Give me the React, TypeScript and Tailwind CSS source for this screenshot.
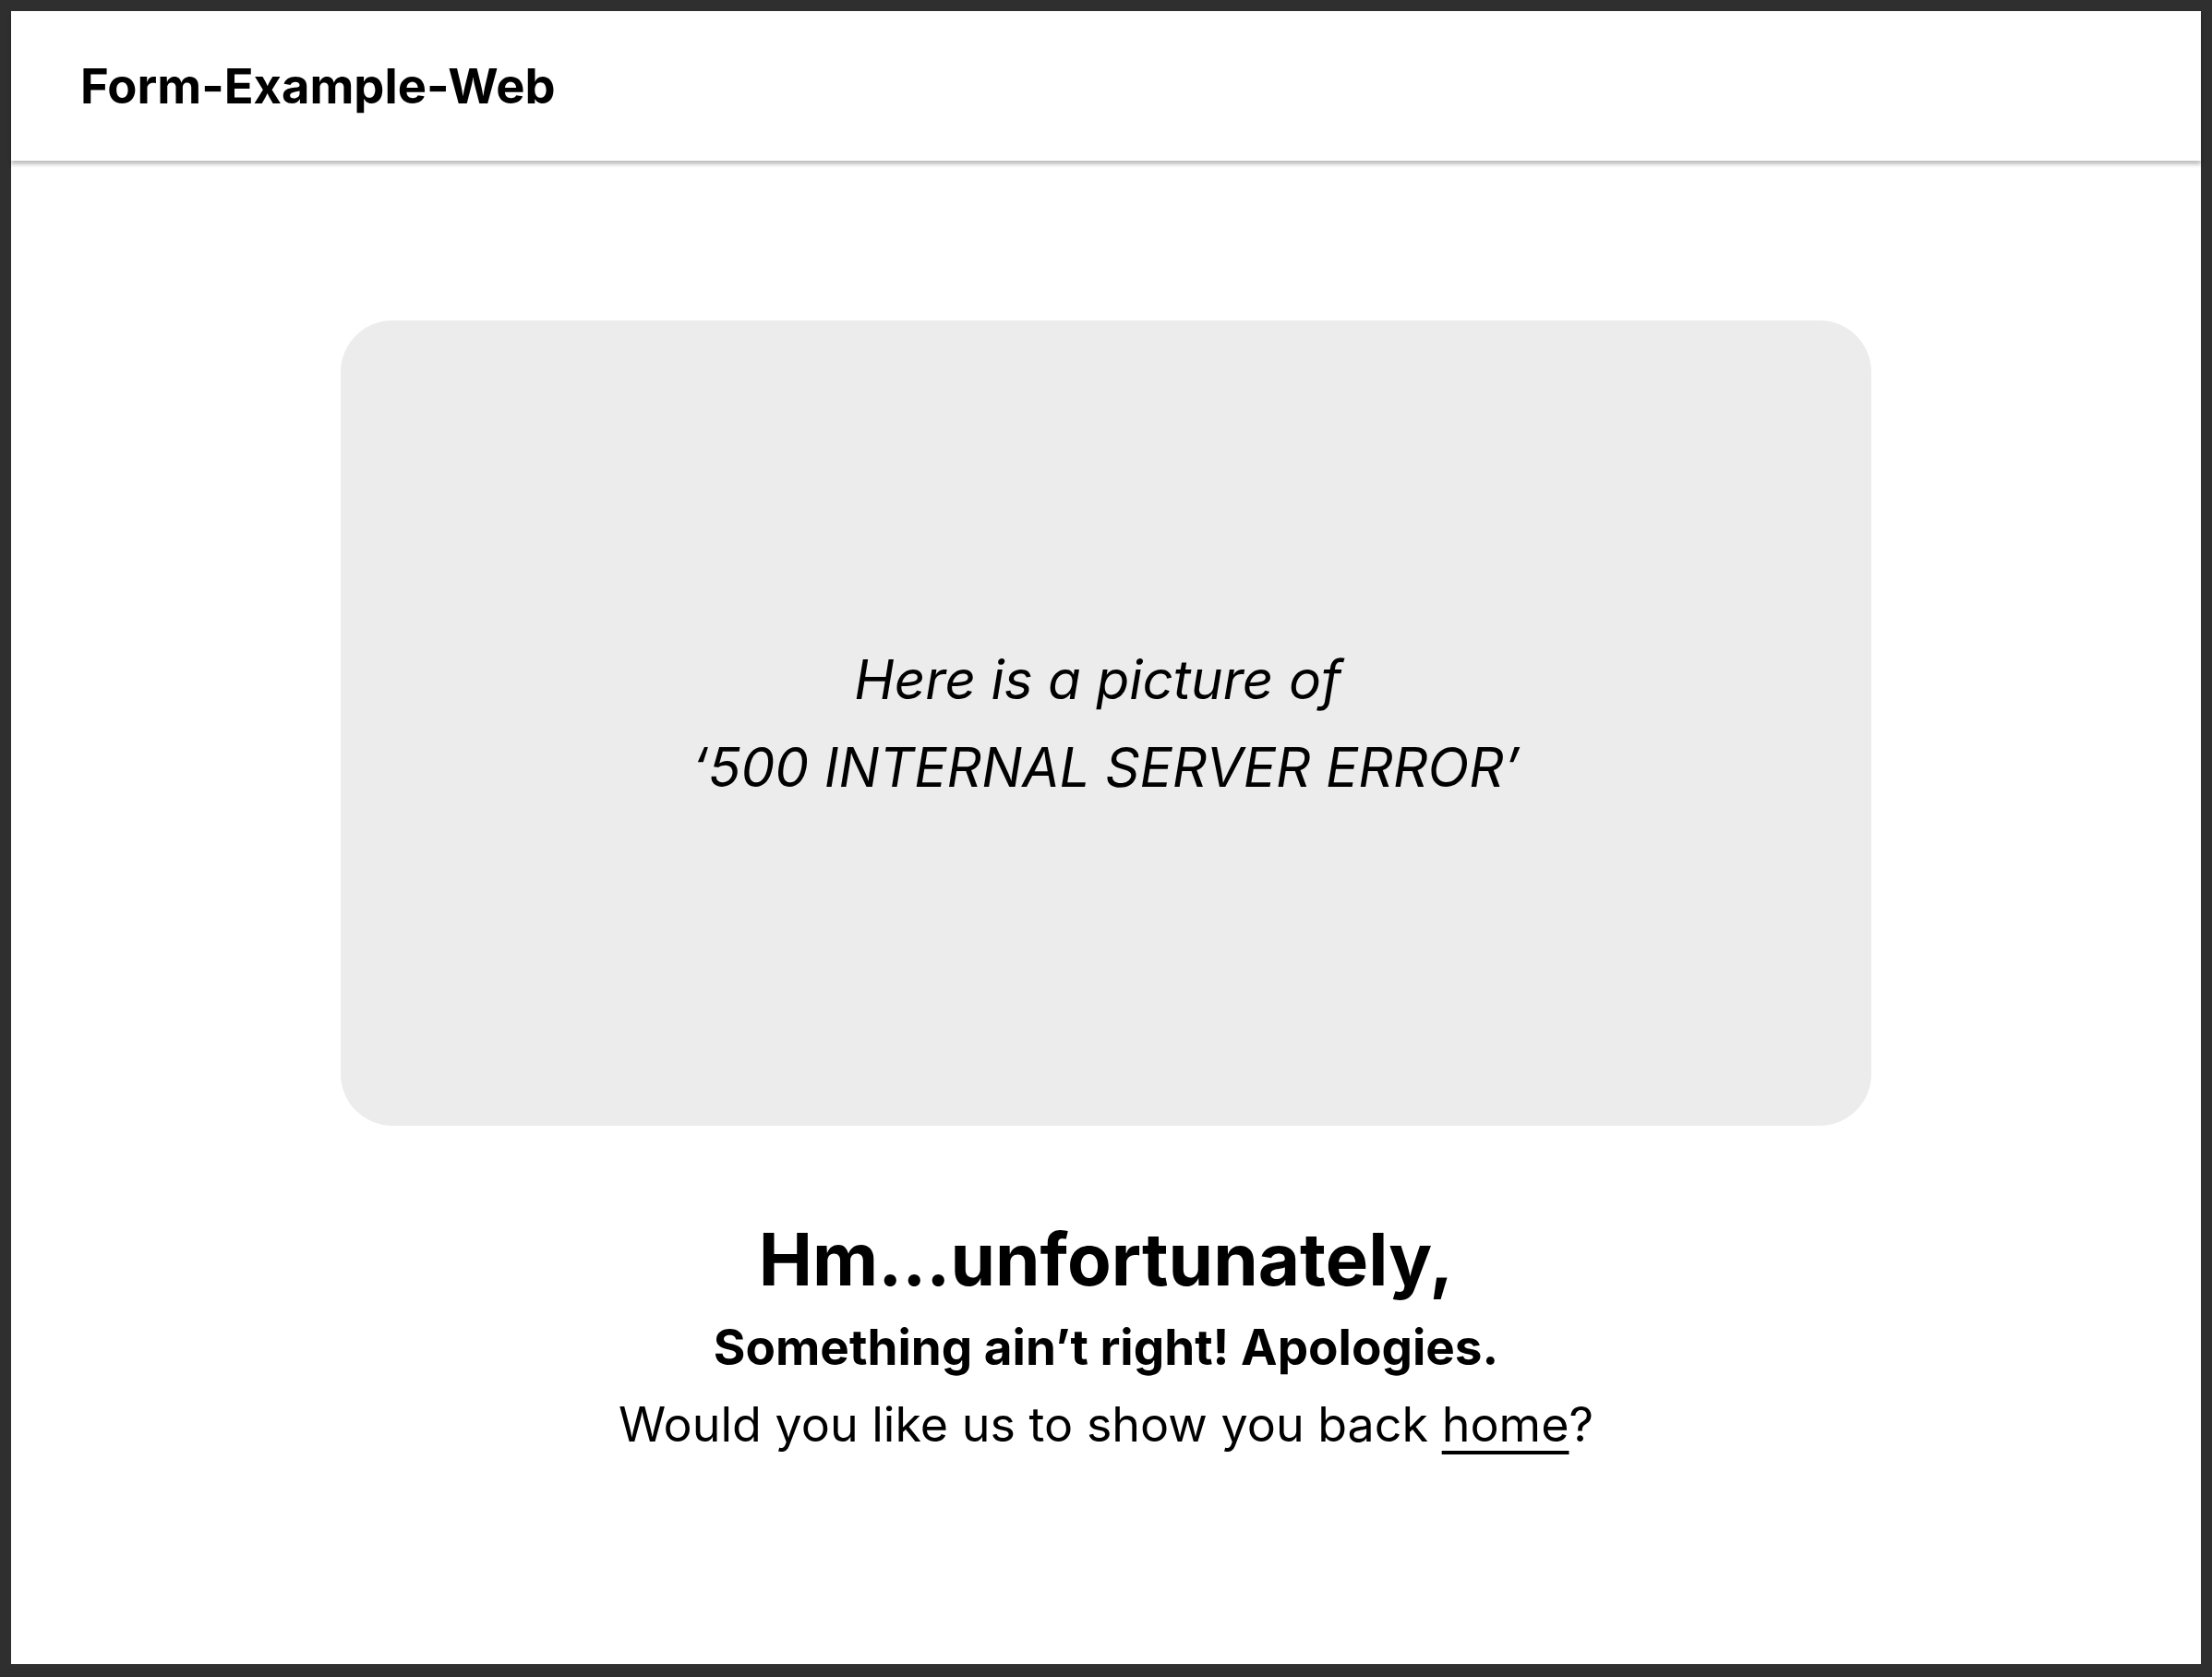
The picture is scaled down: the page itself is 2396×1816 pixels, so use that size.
export default function App() {
  return (
    <div className="h-[1816px] w-full bg-[#2f2f2f] pt-[12px] pr-[12px] pb-[14px] pl-[12px] font-['Inter',sans-serif] text-black">
      <div className="flex h-full flex-col bg-white">
        <header className="flex h-[162px] items-center px-[75px] shadow-[0_4px_4px_rgba(0,0,0,0.25)]">
          <h1 className="text-[52.5px] font-bold">Form-Example-Web</h1>
        </header>

        <main className="flex flex-col items-center pt-[173px]">
          <div className="flex h-[872px] w-[1658px] flex-col items-center justify-center rounded-[56px] bg-[#ececec]">
            <p className="pr-[18px] text-[58.5px] font-normal italic leading-[95px]">Here is a picture of</p>
            <p className="text-[58.5px] font-normal italic leading-[95px]">‘500 INTERNAL SERVER ERROR’</p>
          </div>

          <h2 className="mt-[98px] text-[78px] font-bold leading-[1.2]">Hm...unfortunately,</h2>
          <p className="mt-[14px] text-[53px] font-bold leading-[1.3]">Something ain’t right! Apologies.</p>
          <p className="mt-[16px] text-[52px] font-normal leading-[1.3]">
            Would you like us to show you back{' '}
            <a href="#" className="underline decoration-[4px] underline-offset-[10px]">
              home
            </a>
            ?
          </p>
        </main>
      </div>
    </div>
  );
}
